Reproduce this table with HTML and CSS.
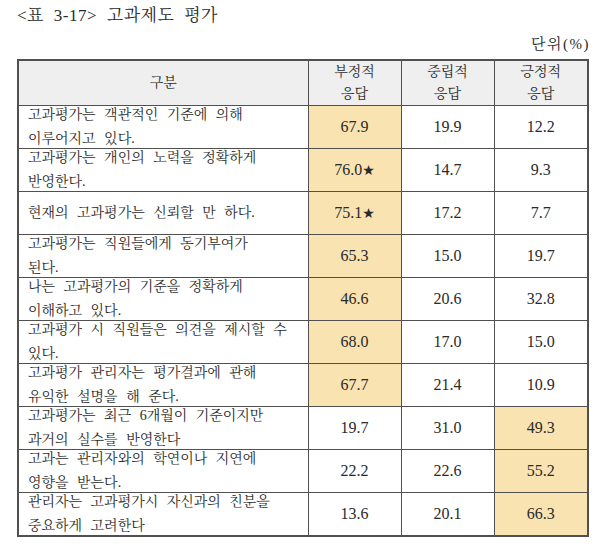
FILE: index.html
```html
<!DOCTYPE html>
<html lang="ko">
<head>
<meta charset="utf-8">
<link rel="stylesheet" href="styles.css">
</head>
<body>
<div class="page">
  <div class="title">&lt;표 3-17&gt; 고과제도 평가</div>
  <div class="unit">단위(%)</div>
  <table class="tbl">
    <colgroup>
      <col class="c-item"><col class="c-num"><col class="c-num"><col class="c-num3">
    </colgroup>
    <thead>
      <tr>
        <th>구분</th>
        <th>부정적<br>응답</th>
        <th>중립적<br>응답</th>
        <th>긍정적<br>응답</th>
      </tr>
    </thead>
    <tbody>
      <tr>
        <td class="item"><div class="txt">고과평가는 객관적인 기준에 의해<br>이루어지고 있다.</div></td>
        <td class="num hl">67.9</td><td class="num">19.9</td><td class="num">12.2</td>
      </tr>
      <tr>
        <td class="item"><div class="txt">고과평가는 개인의 노력을 정확하게<br>반영한다.</div></td>
        <td class="num hl">76.0<span class="star">★</span></td><td class="num">14.7</td><td class="num">9.3</td>
      </tr>
      <tr>
        <td class="item"><div class="txt">현재의 고과평가는 신뢰할 만 하다.</div></td>
        <td class="num hl">75.1<span class="star">★</span></td><td class="num">17.2</td><td class="num">7.7</td>
      </tr>
      <tr>
        <td class="item"><div class="txt">고과평가는 직원들에게 동기부여가<br>된다.</div></td>
        <td class="num hl">65.3</td><td class="num">15.0</td><td class="num">19.7</td>
      </tr>
      <tr>
        <td class="item"><div class="txt">나는 고과평가의 기준을 정확하게<br>이해하고 있다.</div></td>
        <td class="num hl">46.6</td><td class="num">20.6</td><td class="num">32.8</td>
      </tr>
      <tr>
        <td class="item"><div class="txt">고과평가 시 직원들은 의견을 제시할 수<br>있다.</div></td>
        <td class="num hl">68.0</td><td class="num">17.0</td><td class="num">15.0</td>
      </tr>
      <tr>
        <td class="item"><div class="txt">고과평가 관리자는 평가결과에 관해<br>유익한 설명을 해 준다.</div></td>
        <td class="num hl">67.7</td><td class="num">21.4</td><td class="num">10.9</td>
      </tr>
      <tr>
        <td class="item"><div class="txt">고과평가는 최근 6개월이 기준이지만<br>과거의 실수를 반영한다</div></td>
        <td class="num">19.7</td><td class="num">31.0</td><td class="num hl">49.3</td>
      </tr>
      <tr>
        <td class="item"><div class="txt">고과는 관리자와의 학연이나 지연에<br>영향을 받는다.</div></td>
        <td class="num">22.2</td><td class="num">22.6</td><td class="num hl">55.2</td>
      </tr>
      <tr>
        <td class="item"><div class="txt">관리자는 고과평가시 자신과의 친분을<br>중요하게 고려한다</div></td>
        <td class="num">13.6</td><td class="num">20.1</td><td class="num hl">66.3</td>
      </tr>
    </tbody>
  </table>
</div>
</body>
</html>
```

FILE: styles.css
```css
html, body {
  margin: 0;
  padding: 0;
  background: #ffffff;
}

body {
  font-family: "Liberation Serif", "Noto Serif CJK KR", "Noto Sans CJK KR", serif;
  color: #2a2a2a;
}

.page {
  width: 570px;
  padding: 6px 0 0 17px;
}

.title {
  font-size: 17px;
  line-height: 20px;
  white-space: nowrap;
  word-spacing: 5px;
  letter-spacing: 0.5px;
}

.unit {
  margin-top: 8px;
  margin-right: -3px;
  height: 20px;
  font-size: 15px;
  line-height: 20px;
  letter-spacing: 1.5px;
  text-align: right;
}

.tbl {
  margin-top: 5px;
  width: 570px;
  border-collapse: collapse;
  table-layout: fixed;
  border: 2px solid #505050;
}

.c-item { width: 290px; }
.c-num { width: 93px; }
.c-num3 { width: 94px; }

.tbl th,
.tbl td {
  border: 1px solid #505050;
  padding: 0;
  height: 43px;
  box-sizing: border-box;
}

.tbl th {
  background: #efefef;
  font-weight: normal;
  font-size: 14px;
  line-height: 22px;
  text-align: center;
}

.tbl .item {
  padding-left: 9px;
  font-size: 14px;
  white-space: nowrap;
  word-spacing: 5px;
}

.txt {
  line-height: 24px;
  margin: -3px 0;
}

.tbl .num {
  text-align: center;
  font-family: "Liberation Serif", serif;
  font-size: 16px;
}

.tbl .hl {
  background: #f9e3b1;
}

.star {
  font-family: "DejaVu Sans", sans-serif;
  font-size: 14px;
}
```
